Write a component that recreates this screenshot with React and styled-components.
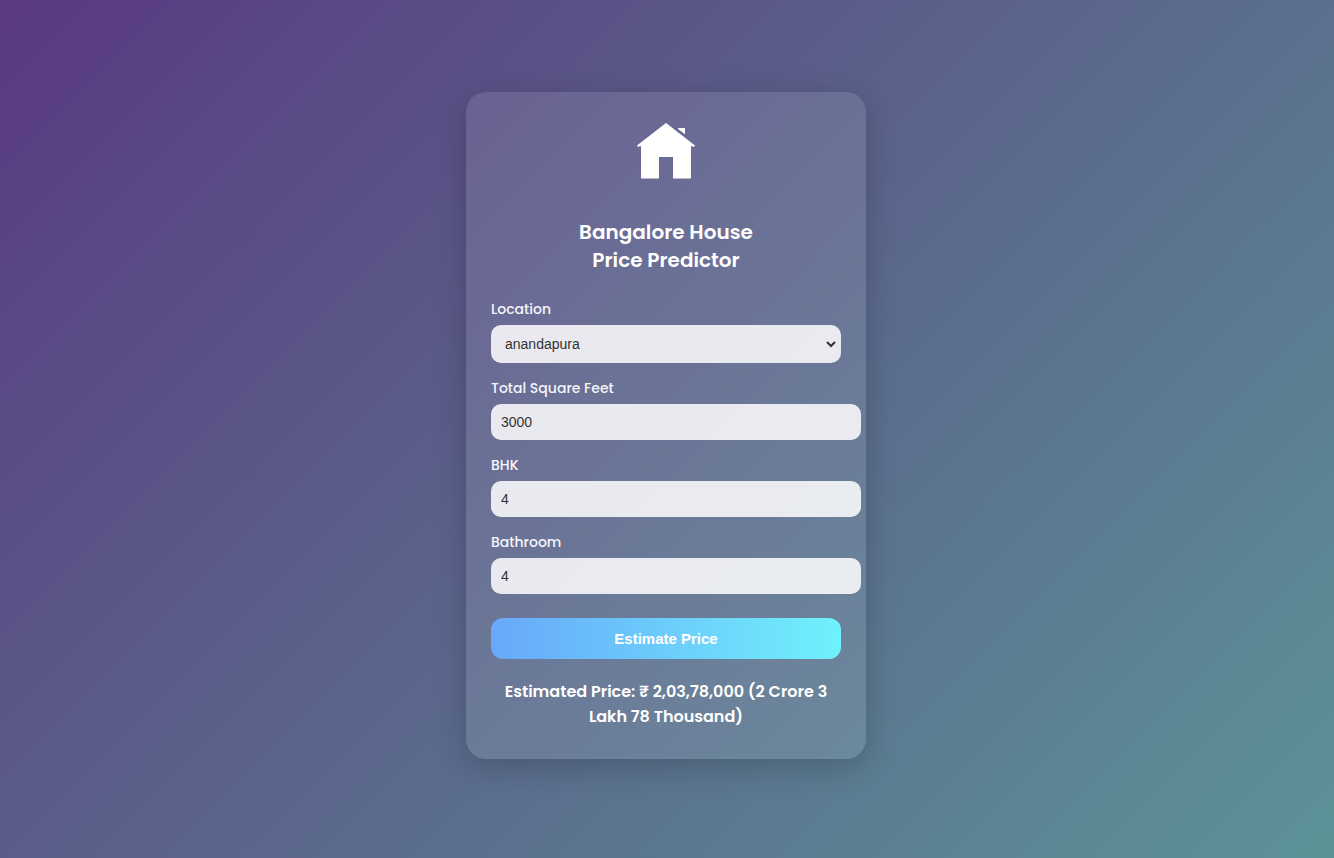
import React, { useState } from "react";
import styled, { createGlobalStyle } from "styled-components";

const GlobalStyle = createGlobalStyle`
  body {
    margin: 0;
    font-family: Poppins, Inter, sans-serif;
  }
`;

const Page = styled.main`
  box-sizing: border-box;
  min-height: 100vh;
  padding: 20px 22px 27px 20px;
  display: flex;
  align-items: center;
  justify-content: center;
  background: linear-gradient(135deg, #593980, #5c9397);
`;

const Card = styled.section`
  box-sizing: border-box;
  width: 100%;
  max-width: 400px;
  padding: 30px 25px;
  border-radius: 20px;
  color: #fff;
  text-align: center;
  background: rgba(255, 255, 255, 0.1);
  box-shadow: 0 8px 32px rgba(0, 0, 0, 0.2);
`;

const HouseIcon = styled.svg`
  display: block;
  width: 60px;
  height: 60px;
  margin: 0 auto 36px;
  fill: #fff;
`;

const Title = styled.h1`
  margin: 0 0 25px;
  font-size: 20px;
  font-weight: 600;
  line-height: 28px;
`;

const Form = styled.form`
  text-align: left;
`;

const Field = styled.div`
  margin-bottom: 15px;
`;

const Label = styled.label`
  display: block;
  margin-bottom: 5px;
  font-size: 14px;
  font-weight: 500;
  line-height: 21px;
  color: #f5f5fa;
`;

const control = `
  display: block;
  width: 100%;
  border: none;
  border-radius: 10px;
  outline: none;
  font-family: "Liberation Sans", Arial, sans-serif;
  font-size: 14px;
  color: #333;
  background-color: rgba(255, 255, 255, 0.85);
`;

const Select = styled.select`
  ${control}
  box-sizing: border-box;
  height: 38px;
  padding: 10px;
  border-right: 2px solid transparent;
`;

const Input = styled.input`
  ${control}
  box-sizing: content-box;
  height: 16px;
  padding: 10px;
`;

const Button = styled.button`
  display: block;
  width: 100%;
  height: 41px;
  margin-top: 24px;
  border: none;
  border-radius: 12px;
  font-family: "Liberation Sans", Arial, sans-serif;
  font-size: 15px;
  font-weight: 700;
  color: #fff;
  background: linear-gradient(to right, #68a8f9, #70f1fc);
  cursor: pointer;
`;

const Result = styled.output`
  display: block;
  margin-top: 20px;
  font-size: 16px;
  font-weight: 600;
  line-height: 25px;
`;

export default function App() {
  const [values, setValues] = useState({ sqft: "3000", bhk: "4", bath: "4" });
  const update = (e) => setValues({ ...values, [e.target.name]: e.target.value });
  const fields = [
    { name: "sqft", label: "Total Square Feet" },
    { name: "bhk", label: "BHK" },
    { name: "bath", label: "Bathroom" },
  ];

  return (
    <>
      <GlobalStyle />
      <Page>
        <Card>
          <HouseIcon viewBox="0 0 60 60" aria-hidden="true">
            <path d="M30 1 L59 23.6 L58 25 L56.5 24.2 H55 V56.5 H37 V35 H23 V56.5 H5 V24.2 H3.5 L2 25 L1 23.6 Z" />
            <path d="M42 6 H49 V12.3 L42 7 Z" />
          </HouseIcon>
          <Title>
            Bangalore House
            <br />
            Price Predictor
          </Title>
          <Form onSubmit={(e) => e.preventDefault()}>
            <Field>
              <Label htmlFor="location">Location</Label>
              <Select id="location" name="location">
                <option>anandapura</option>
              </Select>
            </Field>
            {fields.map((f) => (
              <Field key={f.name}>
                <Label htmlFor={f.name}>{f.label}</Label>
                <Input id={f.name} name={f.name} type="number" value={values[f.name]} onChange={update} />
              </Field>
            ))}
            <Button type="submit">Estimate Price</Button>
          </Form>
          <Result>Estimated Price: ₹ 2,03,78,000 (2 Crore 3 Lakh 78 Thousand)</Result>
        </Card>
      </Page>
    </>
  );
}
